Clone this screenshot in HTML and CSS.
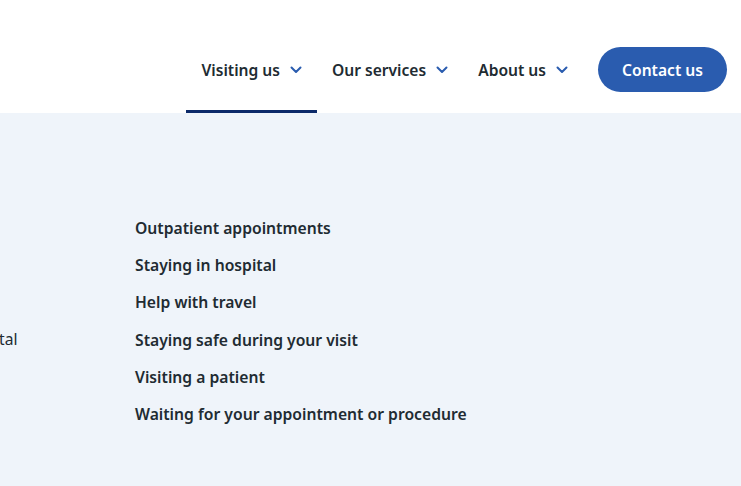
FILE: index.html
```html
<!DOCTYPE html>
<html lang="en">
<head>
<meta charset="utf-8">
<link rel="stylesheet" href="styles.css">
</head>
<body>
<header class="header">
  <nav class="nav">
    <a class="nav-item active" href="#">Visiting us <svg class="chev" viewBox="0 0 12 8" width="12" height="8"><path d="M1.5 1.5 L6 6 L10.5 1.5" fill="none" stroke="#2a5caf" stroke-width="2" stroke-linecap="round" stroke-linejoin="round"/></svg></a>
    <a class="nav-item" href="#">Our services <svg class="chev" viewBox="0 0 12 8" width="12" height="8"><path d="M1.5 1.5 L6 6 L10.5 1.5" fill="none" stroke="#2a5caf" stroke-width="2" stroke-linecap="round" stroke-linejoin="round"/></svg></a>
    <a class="nav-item" href="#">About us <svg class="chev" viewBox="0 0 12 8" width="12" height="8"><path d="M1.5 1.5 L6 6 L10.5 1.5" fill="none" stroke="#2a5caf" stroke-width="2" stroke-linecap="round" stroke-linejoin="round"/></svg></a>
    <a class="btn" href="#">Contact us</a>
  </nav>
</header>
<main class="panel">
  <div class="side">tal</div>
  <ul class="links">
    <li><a href="#">Outpatient appointments</a></li>
    <li><a href="#">Staying in hospital</a></li>
    <li><a href="#">Help with travel</a></li>
    <li><a href="#">Staying safe during your visit</a></li>
    <li><a href="#">Visiting a patient</a></li>
    <li><a href="#">Waiting for your appointment or procedure</a></li>
  </ul>
</main>
</body>
</html>
```
FILE: styles.css
```css
* { box-sizing: border-box; }
html, body { margin: 0; padding: 0; }
body {
  font-family: "Noto Sans", "Open Sans", sans-serif;
  color: #212b32;
  background: #eff4fa;
  width: 741px;
  height: 486px;
  overflow: hidden;
}
a { color: inherit; text-decoration: none; }
.header {
  background: #ffffff;
  height: 113px;
  display: flex;
  justify-content: flex-end;
}
.nav {
  display: flex;
  align-items: stretch;
  padding-right: 14px;
}
.nav-item {
  display: flex;
  align-items: center;
  gap: 10px;
  padding: 0 15px;
  font-size: 15.6px;
  font-weight: 600;
  border-bottom: 3px solid transparent;
  padding-top: 29px;
  height: 113px;
}
.nav-item.active { border-bottom-color: #0c2a69; }
.chev { margin-top: 1px; }
.btn {
  align-self: flex-start;
  margin-top: 47px;
  margin-left: 15px;
  height: 45px;
  width: 129px;
  border-radius: 23px;
  background: #2a5caf;
  color: #fff;
  font-size: 15.6px;
  font-weight: 600;
  display: flex;
  align-items: center;
  justify-content: center;
}
.panel {
  display: flex;
  padding-top: 104px;
}
.side {
  width: 136px;
  margin-left: -1px;
  font-size: 15.6px;
  padding-top: 111px;
}
.links {
  list-style: none;
  margin: 0;
  padding: 0;
  display: flex;
  flex-direction: column;
  gap: 14px;
}
.links li {
  font-size: 15.7px;
  font-weight: 600;
  line-height: 23.2px;
}
```
